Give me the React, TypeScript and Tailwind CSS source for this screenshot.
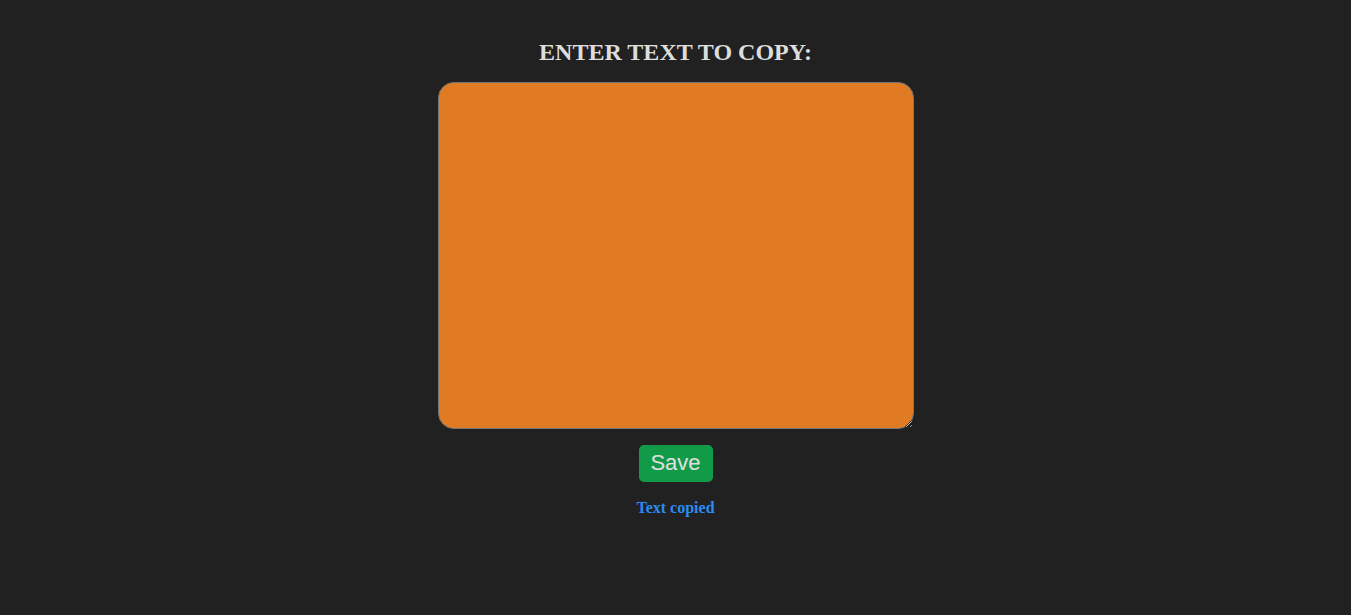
export default function App() {
  return (
    <div className="min-h-[615px] w-full bg-[#212121] flex flex-col items-center pt-[39px]" style={{ fontFamily: '"Liberation Serif", "Times New Roman", serif' }}>
      <h2 className="text-[24px] font-bold text-[#dddddd] leading-[27px] m-0">ENTER TEXT TO COPY:</h2>
      <textarea className="mt-[16px] w-[476px] h-[347px] bg-[#e07b24] border border-[#767676] rounded-[16px] outline-none block p-2 text-black" />
      <button className="mt-[16px] w-[74px] h-[37px] bg-[#119b48] rounded-[5px] text-[22px] text-[#e0e0e0] leading-none pb-[2px]" style={{ fontFamily: '"Liberation Sans", Arial, sans-serif' }}>Save</button>
      <p className="mt-[17px] text-[16px] leading-[18px] font-bold text-[#2a8bf2]">Text copied</p>
    </div>
  );
}
